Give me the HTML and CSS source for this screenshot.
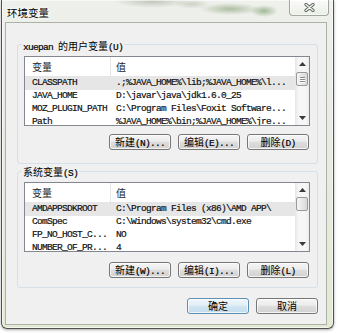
FILE: index.html
```html
<!DOCTYPE html>
<html lang="zh">
<head>
<meta charset="utf-8">
<title>环境变量</title>
<link rel="stylesheet" href="styles.css">
</head>
<body>
<div class="window">
  <div class="titlebar">
    <span class="title c">环境变量</span>
    <div class="close">
      <svg width="11" height="9" viewBox="0 0 11 9"><path d="M2 1.5 L9 7.5 M9 1.5 L2 7.5" stroke="#59655c" stroke-width="3.2" stroke-linecap="round" fill="none"/><path d="M2 1.5 L9 7.5 M9 1.5 L2 7.5" stroke="#f4f6f2" stroke-width="1.4" stroke-linecap="round" fill="none"/></svg>
    </div>
  </div>
  <div class="panel">
    <div class="group g1">
      <div class="legend"><span class="m">xuepan </span><span class="c">的用户变量</span><span class="m">(U)</span></div>
      <div class="list">
        <div class="list-body">
          <div class="hdr"><div class="c">变量</div><div class="c">值</div></div>
          <div class="row sel m"><div>CLASSPATH</div><div>.;%JAVA_HOME%\lib;%JAVA_HOME%\l...</div></div>
          <div class="row m"><div>JAVA_HOME</div><div>D:\javar\java\jdk1.6.0_25</div></div>
          <div class="row m"><div>MOZ_PLUGIN_PATH</div><div>C:\Program Files\Foxit Software...</div></div>
          <div class="row m"><div>Path</div><div>%JAVA_HOME%\bin;%JAVA_HOME%\jre...</div></div>
        </div>
        <div class="sb">
          <div class="sb-btn"><svg width="7" height="4" viewBox="0 0 7 4"><polygon points="0,4 3.5,0 7,4" fill="#3a3a3a"/></svg></div>
          <div class="sb-track"><div class="thumb t1"><i></i><i></i><i></i></div></div>
          <div class="sb-btn"><svg width="7" height="4" viewBox="0 0 7 4"><polygon points="0,0 3.5,4 7,0" fill="#3a3a3a"/></svg></div>
        </div>
      </div>
      <div class="btns">
        <button class="btn"><span class="c">新建</span><span class="m">(N)...</span></button>
        <button class="btn"><span class="c">编辑</span><span class="m">(E)...</span></button>
        <button class="btn"><span class="c">删除</span><span class="m">(D)</span></button>
      </div>
    </div>
    <div class="group g2">
      <div class="legend"><span class="c">系统变量</span><span class="m">(S)</span></div>
      <div class="list">
        <div class="list-body">
          <div class="hdr"><div class="c">变量</div><div class="c">值</div></div>
          <div class="row sel m"><div>AMDAPPSDKROOT</div><div>C:\Program Files (x86)\AMD APP\</div></div>
          <div class="row m"><div>ComSpec</div><div>C:\Windows\system32\cmd.exe</div></div>
          <div class="row m"><div>FP_NO_HOST_C...</div><div>NO</div></div>
          <div class="row m"><div>NUMBER_OF_PR...</div><div>4</div></div>
        </div>
        <div class="sb">
          <div class="sb-btn"><svg width="7" height="4" viewBox="0 0 7 4"><polygon points="0,4 3.5,0 7,4" fill="#3a3a3a"/></svg></div>
          <div class="sb-track"><div class="thumb t2"></div></div>
          <div class="sb-btn"><svg width="7" height="4" viewBox="0 0 7 4"><polygon points="0,0 3.5,4 7,0" fill="#3a3a3a"/></svg></div>
        </div>
      </div>
      <div class="btns">
        <button class="btn"><span class="c">新建</span><span class="m">(W)...</span></button>
        <button class="btn"><span class="c">编辑</span><span class="m">(I)...</span></button>
        <button class="btn"><span class="c">删除</span><span class="m">(L)</span></button>
      </div>
    </div>
    <div class="dlg-btns">
      <button class="btn default"><span class="c">确定</span></button>
      <button class="btn"><span class="c">取消</span></button>
    </div>
  </div>
</div>
</body>
</html>
```
FILE: styles.css
```css
html, body {
  margin: 0;
  padding: 0;
  width: 338px;
  height: 333px;
  overflow: hidden;
  background: #ffffff;
}

.m {
  font-family: "Liberation Mono", "DejaVu Sans Mono", monospace;
  font-size: 9.5px;
  letter-spacing: -0.7px;
  -webkit-text-stroke: 0.2px currentColor;
}

.c {
  font-family: "Noto Sans CJK SC", "Noto Sans", sans-serif;
  font-size: 10px;
  letter-spacing: 0;
}

.window {
  margin-left: 1px;
  width: 333px;
  height: 329px;
  box-sizing: border-box;
  border: 1px solid #4d524b;
  border-top: 0;
  border-radius: 0 0 6px 6px;
  padding: 0 6px 3px 3px;
  display: flex;
  flex-direction: column;
  box-shadow: 0 1px 3px rgba(0, 0, 0, 0.35), inset 0 0 0 1px rgba(255, 255, 255, 0.6);
  background:
    radial-gradient(ellipse 38px 7px at 150px 1px, rgba(150, 160, 140, 0.55), rgba(150, 160, 140, 0)),
    radial-gradient(ellipse 30px 6px at 228px 9px, rgba(120, 150, 100, 0.55), rgba(120, 150, 100, 0)),
    radial-gradient(ellipse 14px 6px at 262px 11px, rgba(110, 150, 90, 0.6), rgba(110, 150, 90, 0)),
    radial-gradient(ellipse 18px 5px at 190px 4px, rgba(170, 180, 160, 0.5), rgba(170, 180, 160, 0)),
    linear-gradient(#eef0ec, #e8ebe3 40%, #e2e9d3);
}

.titlebar {
  height: 22px;
  display: flex;
  justify-content: space-between;
  align-items: flex-start;
}

.title {
  margin: 5px 0 0 2px;
  line-height: 15px;
  font-size: 10.5px;
  color: #000;
  text-shadow: 0 0 5px #fff, 0 0 3px #fff;
}

.close {
  width: 40px;
  height: 16px;
  margin-right: -2px;
  box-sizing: border-box;
  border: 1px solid rgba(90, 100, 90, 0.55);
  border-top: 0;
  border-radius: 0 0 4px 4px;
  background: linear-gradient(rgba(255, 255, 255, 0.75), rgba(232, 238, 226, 0.7));
  box-shadow: inset 0 0 0 1px rgba(255, 255, 255, 0.6);
  display: flex;
  align-items: center;
  justify-content: center;
}

.panel {
  flex: 1;
  box-sizing: border-box;
  border: 1px solid #acb2a8;
  background: #f0f0f0;
  padding: 21px 8px 0 11px;
  display: flex;
  flex-direction: column;
}

.group {
  box-sizing: border-box;
  width: 301px;
  border: 1px solid #d5dfe5;
  border-radius: 3px;
  padding: 0 7px 0 6px;
}

.g1 { height: 120px; }
.g2 { height: 117px; margin-top: 7px; }

.legend {
  margin: -7px 0 0 -2px;
  padding: 0 1px;
  height: 13px;
  line-height: 13px;
  background: #f0f0f0;
  width: fit-content;
  white-space: nowrap;
  color: #000;
}

.g2 .legend { margin-top: -8px; }

.list {
  margin-top: 5px;
  width: 286px;
  height: 70px;
  box-sizing: border-box;
  border: 1px solid #828790;
  background: #fff;
  display: flex;
}

.list-body {
  flex: 1;
  overflow: hidden;
  min-width: 0;
}

.hdr {
  display: grid;
  grid-template-columns: 86px 1fr;
  height: 19px;
  line-height: 19px;
  border-bottom: 1px solid #e5e5e5;
  color: #1e1e1e;
}

.hdr > div:first-child {
  border-right: 1px solid #e5e5e5;
  padding-left: 7px;
}

.hdr > div:last-child { padding-left: 5px; }

.row {
  display: grid;
  grid-template-columns: 86px 1fr;
  height: 13px;
  line-height: 12px;
  white-space: nowrap;
  color: #111;
}

.row > div { overflow: hidden; }
.row > div:first-child { padding-left: 7px; }
.row > div:last-child { padding-left: 5px; }

.row.sel { background: #e6e6e6; }

.sb {
  width: 14px;
  display: flex;
  flex-direction: column;
  background: linear-gradient(to right, #e6e6e6, #f6f6f6 25%, #f6f6f6 75%, #ececec);
}

.sb-btn {
  height: 14px;
  display: flex;
  align-items: center;
  justify-content: center;
}

.sb-track {
  flex: 1;
  padding: 0 1px;
}

.thumb {
  box-sizing: border-box;
  height: 14px;
  border: 1px solid #9a9a9a;
  border-radius: 2px;
  background: linear-gradient(to right, #f6f6f6, #e6e6e6 50%, #d8d8d8);
  display: flex;
  flex-direction: column;
  align-items: center;
  justify-content: center;
  gap: 1px;
}

.t1 { margin-top: 1px; }

.thumb i {
  display: block;
  width: 5px;
  height: 1px;
  background: #8a8a8a;
  box-shadow: 0 1px 0 #fff;
}

.btns {
  display: flex;
  justify-content: flex-end;
  gap: 7px;
  margin: 8px 1px 0 0;
}

.g2 .btns { margin-top: 10px; }

.btn {
  width: 62px;
  height: 16px;
  box-sizing: border-box;
  border: 1px solid #767676;
  border-radius: 3px;
  padding: 0;
  margin: 0;
  background: linear-gradient(#f5f5f5, #ececec 45%, #dedede 50%, #d1d1d1);
  box-shadow: inset 0 0 0 1px rgba(255, 255, 255, 0.75);
  line-height: 14px;
  text-align: center;
  color: #000;
  white-space: nowrap;
}

.btn.default {
  border-color: #5d8fb3;
  background: linear-gradient(#eef6fb, #e2eff7 45%, #d2e6f2 50%, #c3dcec);
}

.dlg-btns {
  display: flex;
  justify-content: flex-end;
  gap: 7px;
  margin-top: 10px;
}
```
